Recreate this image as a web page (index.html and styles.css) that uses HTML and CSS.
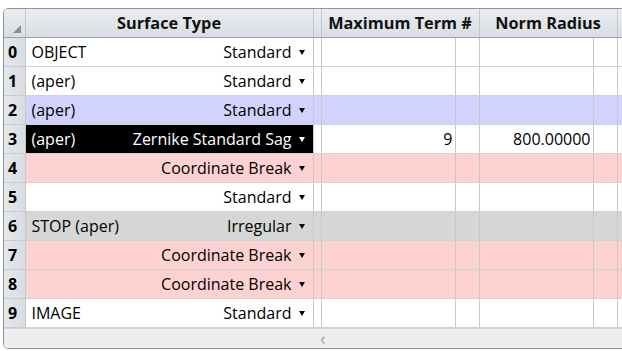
FILE: index.html
```html
<!DOCTYPE html>
<html lang="en">
<head>
    <meta charset="UTF-8">
    <title>Lens Data</title>
    <link rel="stylesheet" href="styles.css">
</head>
<body>
    <div class="frame">
    <div class="editor">
        <table class="lde">
            <colgroup>
                <col class="c-num">
                <col class="c-type">
                <col class="c-gap">
                <col class="c-term">
                <col class="c-sub">
                <col class="c-norm">
                <col class="c-sub">
                <col class="c-rest">
            </colgroup>
            <thead>
                <tr>
                    <th class="corner"><span class="corner-mark"></span></th>
                    <th>Surface Type</th>
                    <th></th>
                    <th colspan="2">Maximum Term #</th>
                    <th colspan="2">Norm Radius</th>
                    <th></th>
                </tr>
            </thead>
            <tbody>
                <tr>
                    <td class="num">0</td>
                    <td><div class="type"><span class="comment">OBJECT</span><span class="kind">Standard</span><span class="arrow"></span></div></td>
                    <td></td><td></td><td></td><td></td><td></td><td></td>
                </tr>
                <tr>
                    <td class="num">1</td>
                    <td><div class="type"><span class="comment">(aper)</span><span class="kind">Standard</span><span class="arrow"></span></div></td>
                    <td></td><td></td><td></td><td></td><td></td><td></td>
                </tr>
                <tr class="row-blue">
                    <td class="num">2</td>
                    <td><div class="type"><span class="comment">(aper)</span><span class="kind">Standard</span><span class="arrow"></span></div></td>
                    <td></td><td></td><td></td><td></td><td></td><td></td>
                </tr>
                <tr>
                    <td class="num">3</td>
                    <td class="selected"><div class="type"><span class="comment">(aper)</span><span class="kind">Zernike Standard Sag</span><span class="arrow"></span></div></td>
                    <td></td><td class="val">9</td><td></td><td class="val">800.00000</td><td></td><td></td>
                </tr>
                <tr class="row-pink">
                    <td class="num">4</td>
                    <td><div class="type"><span class="comment"></span><span class="kind">Coordinate Break</span><span class="arrow"></span></div></td>
                    <td></td><td></td><td></td><td></td><td></td><td></td>
                </tr>
                <tr>
                    <td class="num">5</td>
                    <td><div class="type"><span class="comment"></span><span class="kind">Standard</span><span class="arrow"></span></div></td>
                    <td></td><td></td><td></td><td></td><td></td><td></td>
                </tr>
                <tr class="row-grey">
                    <td class="num">6</td>
                    <td><div class="type"><span class="comment">STOP (aper)</span><span class="kind">Irregular</span><span class="arrow"></span></div></td>
                    <td></td><td></td><td></td><td></td><td></td><td></td>
                </tr>
                <tr class="row-pink">
                    <td class="num">7</td>
                    <td><div class="type"><span class="comment"></span><span class="kind">Coordinate Break</span><span class="arrow"></span></div></td>
                    <td></td><td></td><td></td><td></td><td></td><td></td>
                </tr>
                <tr class="row-pink">
                    <td class="num">8</td>
                    <td><div class="type"><span class="comment"></span><span class="kind">Coordinate Break</span><span class="arrow"></span></div></td>
                    <td></td><td></td><td></td><td></td><td></td><td></td>
                </tr>
                <tr>
                    <td class="num">9</td>
                    <td><div class="type"><span class="comment">IMAGE</span><span class="kind">Standard</span><span class="arrow"></span></div></td>
                    <td></td><td></td><td></td><td></td><td></td><td></td>
                </tr>
            </tbody>
        </table>
        <div class="hscroll">
            <span class="scroll-left">&lsaquo;</span>
        </div>
    </div>
    </div>
</body>
</html>
```

FILE: styles.css
```css
body {
    margin: 0;
    padding: 8px 0 0 3px;
    background: #ffffff;
    font-family: "Open Sans", "Noto Sans", sans-serif;
    overflow: hidden;
}

.frame {
    width: 619px;
    overflow: hidden;
}

.editor {
    width: 700px;
    border: 1px solid #8c96a0;
    border-radius: 5px;
    overflow: hidden;
    background: #ffffff;
}

.lde {
    border-collapse: collapse;
    table-layout: fixed;
    width: 720px;
    font-size: 16px;
    color: #000000;
}

.c-num { width: 21px; }
.c-type { width: 288px; }
.c-gap { width: 8px; }
.c-term { width: 134px; }
.c-sub { width: 24px; }
.c-norm { width: 114px; }
.c-rest { width: 107px; }

.lde th {
    height: 28px;
    padding: 0;
    background: linear-gradient(#eaedf0, #d9dde1);
    border-left: 1px solid #c2c7cc;
    border-bottom: 1px solid #97a3ae;
    font-weight: bold;
    font-size: 16.3px;
    text-align: center;
    color: #111111;
    white-space: nowrap;
}

.lde th:first-child {
    border-left: none;
}

.corner {
    position: relative;
}

.corner-mark {
    position: absolute;
    right: 4px;
    bottom: 4px;
    width: 0;
    height: 0;
    border-left: 8px solid transparent;
    border-bottom: 8px solid #8a8f94;
}

.lde td {
    height: 28px;
    padding: 0;
    border-left: 1px solid #c8c8c8;
    border-bottom: 1px solid #d2d2d2;
    white-space: nowrap;
}

.lde td.num {
    border-left: none;
    border-bottom: 1px solid #c9cdd1;
    background: linear-gradient(90deg, #e4e7ea, #d8dce0);
    font-weight: bold;
    padding-left: 4px;
    font-size: 16px;
}

.type {
    display: flex;
    align-items: center;
    padding: 0 8px 0 6px;
}

.comment {
    flex: 1;
}

.arrow {
    width: 0;
    height: 0;
    margin: 1px 0 0 7px;
    border-left: 3.5px solid transparent;
    border-right: 3.5px solid transparent;
    border-top: 5px solid #000000;
}

.selected {
    background: #000000;
    color: #ffffff;
}

.selected .arrow {
    border-top-color: #ffffff;
}

.val {
    text-align: right;
    padding-right: 2px !important;
}

.row-blue td { background: #d2d2ff; }
.row-pink td { background: #ffd2d2; }
.row-grey td { background: #d6d6d6; }

.row-blue td.num,
.row-pink td.num,
.row-grey td.num {
    background: linear-gradient(90deg, #e4e7ea, #d8dce0);
}

.hscroll {
    height: 19px;
    background: #eeeeee;
    border-top: 1px solid #d6d6d6;
    padding-left: 316px;
    display: flex;
    align-items: center;
}

.scroll-left {
    color: #a0a0a0;
    font-size: 18px;
    line-height: 1;
    margin-top: -2px;
}
```
